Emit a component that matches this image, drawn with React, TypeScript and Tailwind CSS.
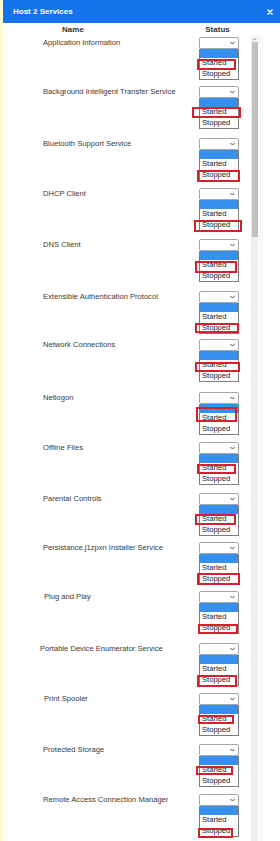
import React from "react";

type Row = {
  name: string;
  nameCls: string;
  rowCls: string;
  boxCls: string;
};

const rows: Row[] = [
  { name: "Application Information", nameCls: "pl-[40px]", rowCls: "h-[49px]", boxCls: "left-[-3px] top-[10px] w-[39px] h-[11px]" },
  { name: "Background Intelligent Transfer Service", nameCls: "pl-[40px]", rowCls: "h-[52px]", boxCls: "left-[-8px] top-[9px] w-[49px] h-[11px]" },
  { name: "Bluetooth Support Service", nameCls: "pl-[40px]", rowCls: "h-[50px]", boxCls: "left-[-3px] top-[20px] w-[43px] h-[12px]" },
  { name: "DHCP Client", nameCls: "pl-[40px]", rowCls: "h-[51px]", boxCls: "left-[-6px] top-[20px] w-[48px] h-[12px]" },
  { name: "DNS Client", nameCls: "pl-[40px]", rowCls: "h-[52px]", boxCls: "left-[-5px] top-[10px] w-[42px] h-[12px]" },
  { name: "Extensible Authentication Protocol", nameCls: "pl-[40px]", rowCls: "h-[48px]", boxCls: "left-[-5px] top-[20px] w-[44px] h-[10px]" },
  { name: "Network Connections", nameCls: "pl-[40px]", rowCls: "h-[53px]", boxCls: "left-[-5px] top-[11px] w-[45px] h-[10px]" },
  { name: "Netlogon", nameCls: "pl-[40px]", rowCls: "h-[50px]", boxCls: "left-[-4px] top-[3px] w-[41px] h-[15px]" },
  { name: "Offline Files", nameCls: "pl-[40px]", rowCls: "h-[51px]", boxCls: "left-[-3px] top-[10px] w-[39px] h-[10px]" },
  { name: "Parental Controls", nameCls: "pl-[40px]", rowCls: "h-[49px]", boxCls: "left-[-5px] top-[9px] w-[41px] h-[11px]" },
  { name: "Persistance.j1zpxn Installer Service", nameCls: "pl-[40px]", rowCls: "h-[49px]", boxCls: "left-[-3px] top-[19px] w-[43px] h-[12px]" },
  { name: "Plug and Play", nameCls: "pl-[41px]", rowCls: "h-[52px]", boxCls: "left-[-2px] top-[21px] w-[40px] h-[10px]" },
  { name: "Portable Device Enumerator Service", nameCls: "pl-[37px]", rowCls: "h-[50px]", boxCls: "left-[-3px] top-[20px] w-[40px] h-[12px]" },
  { name: "Print Spooler", nameCls: "pl-[41px]", rowCls: "h-[51px]", boxCls: "left-[-2px] top-[10px] w-[36px] h-[9px]" },
  { name: "Protected Storage", nameCls: "pl-[40px]", rowCls: "h-[50px]", boxCls: "left-[-4px] top-[10px] w-[37px] h-[9px]" },
  { name: "Remote Access Connection Manager", nameCls: "pl-[40px]", rowCls: "h-[50px]", boxCls: "left-[-2px] top-[22px] w-[35px] h-[10px]" },
];

function Chevron() {
  return (
    <svg width="5" height="4" viewBox="0 0 5 4" className="block">
      <path d="M0.5 1 L2.5 3 L4.5 1" fill="none" stroke="#444" strokeWidth="1" />
    </svg>
  );
}

function ServiceRow({ row }: { row: Row }) {
  return (
    <div className={`flex shrink-0 pt-[1px] ${row.rowCls}`}>
      <div className={`w-[196px] shrink-0 h-[12px] flex items-center text-[7.6px] text-[#3a3a3a] whitespace-nowrap ${row.nameCls}`}>
        {row.name}
      </div>
      <div className="w-[40px] shrink-0 flex flex-col">
        <div className="h-[12px] bg-white border border-[#a6a6a6] rounded-[2px] flex items-center justify-end pr-[3px]">
          <Chevron />
        </div>
        <div className="relative h-[31px] border-x border-b border-[#7d7d7d] bg-white flex flex-col">
          <div className="h-[9px] bg-[#3590f0]" />
          <div className="h-[10px] leading-[10px] pl-[2px] text-[7.6px] text-[#222]">Started</div>
          <div className="h-[11px] leading-[11px] pl-[2px] text-[7.6px] text-[#222]">Stopped</div>
          <div className={`absolute border-2 border-[#d3222e] ${row.boxCls}`} />
        </div>
      </div>
    </div>
  );
}

export default function App() {
  return (
    <div
      className="w-[280px] h-[841px] overflow-hidden flex bg-[#fffbcf]"
      style={{ fontFamily: '"Liberation Sans", Arial, sans-serif' }}
    >
      <div className="w-[3px] shrink-0" />
      <div className="flex-1 flex flex-col bg-white min-w-0">
        <div className="h-[23px] shrink-0 bg-[#1473ec] flex items-center justify-between pl-[10px] pr-[7px]">
          <span className="text-white font-bold text-[8px]">Host 2 Services</span>
          <svg width="6" height="6" viewBox="0 0 6 6" className="block">
            <path d="M1 1 L5 5 M5 1 L1 5" stroke="#fff" strokeWidth="1.6" strokeLinecap="round" />
          </svg>
        </div>
        <div className="flex-1 flex min-h-0 overflow-hidden">
          <div className="w-[248px] shrink-0 flex flex-col">
            <div className="h-[13px] shrink-0 flex items-center text-[8px] font-bold text-[#333]">
              <span className="ml-[37px] w-[66px] text-center">Name</span>
              <span className="ml-[92px] w-[39px] text-center">Status</span>
            </div>
            {rows.map((r) => (
              <ServiceRow key={r.name} row={r} />
            ))}
          </div>
          <div className="w-[7px] shrink-0 mt-[13px] bg-[#f0f0f0] flex flex-col items-center">
            <div className="h-[6px] flex items-center justify-center">
              <svg width="3" height="2" viewBox="0 0 3 2" className="block">
                <path d="M0 2 L1.5 0 L3 2 Z" fill="#a3a3a3" />
              </svg>
            </div>
            <div className="w-[6px] h-[195px] bg-[#c1c1c1]" />
          </div>
          <div className="w-[5px] shrink-0 mt-[13px] bg-[#fafafa]" />
          <div className="flex-1" />
        </div>
      </div>
    </div>
  );
}
